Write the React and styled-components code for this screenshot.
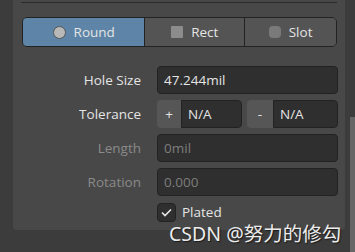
import React from "react";
import styled, { createGlobalStyle } from "styled-components";

const colors = {
  outer: "#3c3c3c",
  panel: "#484848",
  line: "#2a2a2a",
  border: "#222222",
  field: "#2f2f2f",
  segment: "#545454",
  active: "#5e84a7",
  text: "#e4e4e4",
  dim: "#8a8a8a",
  chip: "#565656",
  thumb: "#666666",
};

const GlobalStyle = createGlobalStyle`
  html, body { margin: 0; padding: 0; background: ${colors.outer}; }
  body { font-family: "Open Sans", "DejaVu Sans", sans-serif; }
`;

const Page = styled.div`
  position: relative;
  width: 355px;
  height: 252px;
  overflow: hidden;
  display: flex;
  background: ${colors.outer};
`;

const Panel = styled.div`
  margin-left: 13px;
  width: 332px;
  height: 230px;
  background: ${colors.panel};
  border-radius: 0 0 4px 4px;
  padding: 2px 8px 0 8px;
  box-sizing: border-box;
  display: flex;
  flex-direction: column;
`;

const Separator = styled.div`
  height: 1px;
  background: ${colors.line};
`;

const Segments = styled.div`
  margin-top: 14px;
  margin-left: 1px;
  width: 315px;
  height: 30px;
  display: flex;
  border: 1px solid ${colors.border};
  border-radius: 5px;
  overflow: hidden;
  box-sizing: border-box;
`;

const Segment = styled.div`
  width: ${(p) => p.$w}px;
  display: flex;
  align-items: center;
  justify-content: center;
  gap: 8px;
  background: ${(p) => (p.$active ? colors.active : colors.segment)};
  border-left: ${(p) => (p.$first ? "none" : `1px solid ${colors.border}`)};
  color: ${colors.text};
  font-size: 13.5px;
`;

const Dot = styled.span`
  width: ${(p) => p.$size}px;
  height: ${(p) => p.$size}px;
  border-radius: ${(p) => p.$radius};
  background: ${(p) => p.$color};
  border: ${(p) => (p.$ring ? "1px solid #555" : "none")};
`;

const Form = styled.div`
  margin-top: 19px;
  display: flex;
  flex-direction: column;
  gap: 6px;
`;

const Row = styled.div`
  display: grid;
  grid-template-columns: 119px 181px;
  column-gap: 16px;
  height: 28px;
  align-items: center;
  margin-left: 1px;
`;

const Label = styled.div`
  text-align: right;
  font-size: 13.5px;
  color: ${(p) => (p.$dim ? colors.dim : colors.text)};
`;

const Field = styled.div`
  height: 28px;
  box-sizing: border-box;
  background: ${colors.field};
  border: 1px solid ${colors.border};
  border-radius: 4px;
  display: flex;
  align-items: center;
  padding-left: 6px;
  font-size: 13.5px;
  color: ${(p) => (p.$dim ? "#7d7d7d" : colors.text)};
`;

const Split = styled.div`
  display: flex;
  height: 28px;
  gap: 5px;
`;

const Pair = styled.div`
  display: flex;
  width: ${(p) => p.$w}px;
  border-radius: 4px;
  overflow: hidden;
`;

const Chip = styled.div`
  width: ${(p) => p.$w}px;
  background: ${colors.chip};
  display: flex;
  align-items: center;
  justify-content: center;
  color: ${colors.text};
  font-size: 13.5px;
`;

const PairField = styled(Field)`
  flex: 1;
  border-radius: 0 4px 4px 0;
`;

const CheckRow = styled.div`
  display: flex;
  align-items: center;
  gap: 6px;
  margin-left: 136px;
  height: 20px;
  color: ${colors.text};
  font-size: 13.5px;
`;

const Box = styled.div`
  width: 19px;
  height: 19px;
  box-sizing: border-box;
  background: ${colors.field};
  border: 1px solid ${colors.border};
  border-radius: 4px;
  display: flex;
  align-items: center;
  justify-content: center;
`;

const Scroll = styled.div`
  margin-left: 5px;
  margin-top: 117px;
  width: 5px;
  height: 135px;
  background: ${colors.thumb};
`;

const Watermark = styled.div`
  position: absolute;
  left: 169px;
  top: 218px;
  font-family: "Noto Sans", "Noto Sans CJK SC", sans-serif;
  font-size: 19.5px;
  color: #ececec;
  text-shadow: 1px 1px 1px #1a1a1a;
  white-space: nowrap;
`;

export default function App() {
  return (
    <Page>
      <GlobalStyle />
      <Panel>
        <Separator />
        <Segments>
          <Segment $w={123} $first $active>
            <Dot $size={11} $radius="50%" $color="#b8b8b8" $ring />
            Round
          </Segment>
          <Segment $w={100}>
            <Dot $size={12} $radius="1px" $color="#8c8c8c" />
            Rect
          </Segment>
          <Segment $w={92}>
            <Dot $size={12} $radius="4px" $color="#7a7a7a" />
            Slot
          </Segment>
        </Segments>
        <Form>
          <Row>
            <Label>Hole Size</Label>
            <Field>47.244mil</Field>
          </Row>
          <Row>
            <Label>Tolerance</Label>
            <Split>
              <Pair $w={85}>
                <Chip $w={24}>+</Chip>
                <PairField>N/A</PairField>
              </Pair>
              <Pair $w={91}>
                <Chip $w={26}>-</Chip>
                <PairField>N/A</PairField>
              </Pair>
            </Split>
          </Row>
          <Row>
            <Label $dim>Length</Label>
            <Field $dim>0mil</Field>
          </Row>
          <Row>
            <Label $dim>Rotation</Label>
            <Field $dim>0.000</Field>
          </Row>
          <CheckRow>
            <Box>
              <svg width="11" height="9" viewBox="0 0 11 9">
                <path d="M1 4.5 L4 7.5 L10 1.5" fill="none" stroke="#e8e8e8" strokeWidth="1.6" />
              </svg>
            </Box>
            Plated
          </CheckRow>
        </Form>
      </Panel>
      <Scroll />
      <Watermark>CSDN @努力的修勾</Watermark>
    </Page>
  );
}
